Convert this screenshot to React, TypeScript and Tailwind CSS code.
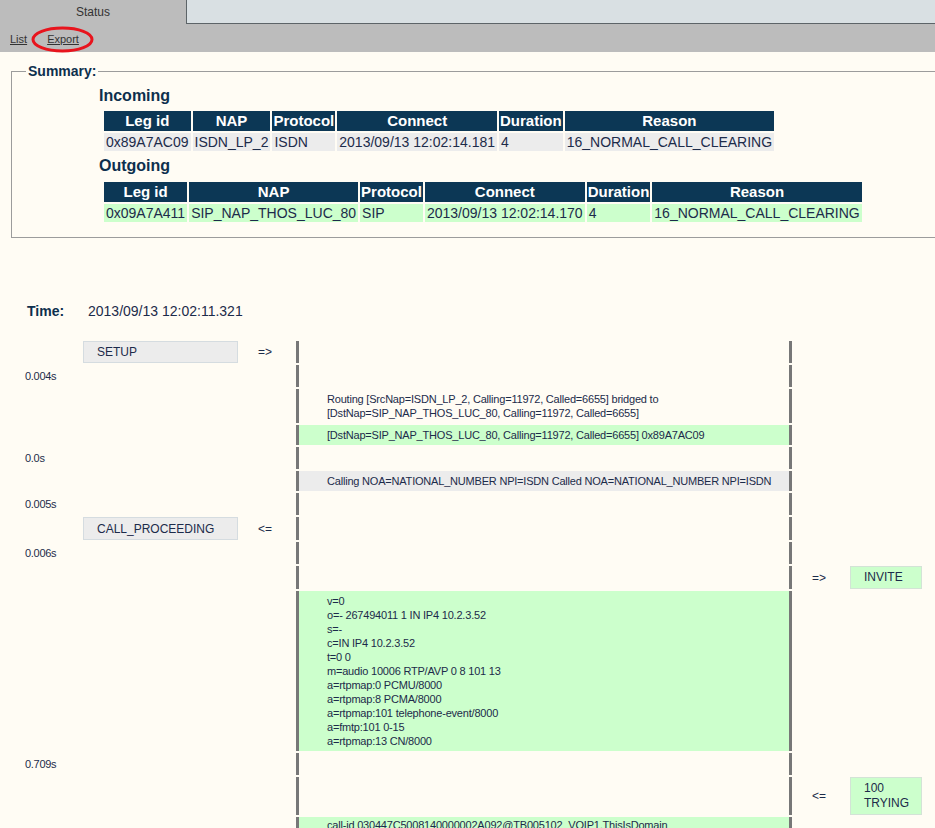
import React from "react";

type RowProps = {
  h: number;
  time?: string;
  left?: string;
  leftArrow?: string;
  center?: string[];
  centerBg?: string;
  rightArrow?: string;
  right?: string[];
};

const rowHeights: Record<number, string> = {
  20: "h-[20px]",
  22: "h-[22px]",
  23: "h-[23px]",
  34: "h-[34px]",
  38: "h-[38px]",
  160: "h-[160px]",
  120: "h-[120px]",
};

function Row({ h, time, left, leftArrow, center, centerBg, rightArrow, right }: RowProps) {
  return (
    <div className={`grid grid-cols-[83px_155px_58px_496px_58px_72px] ${rowHeights[h]}`}>
      <div className="flex items-center pl-[25px] text-[11px] tracking-[-0.3px]">{time}</div>
      <div className="flex">
        {left && (
          <div className="flex flex-1 items-center border border-[#d5dce0] bg-[#ececec] pl-[13px] text-[12px]">
            {left}
          </div>
        )}
      </div>
      <div className="flex items-center pl-[20px] text-[12px]">{leftArrow}</div>
      <div
        className={`flex flex-col justify-center border-x-[3px] border-[#777777] pl-[28px] text-[11px] leading-[14px] tracking-[-0.2px] ${centerBg ?? ""}`}
      >
        {center?.map((l, i) => (
          <div key={i} className="whitespace-nowrap">{l}</div>
        ))}
      </div>
      <div className="flex items-center pl-[20px] text-[12px]">{rightArrow}</div>
      <div className="flex">
        {right && (
          <div className="flex flex-1 flex-col justify-center border border-[#d3e3d6] bg-[#ccffcc] pl-[13px] text-[12px] leading-[15px]">
            {right.map((l, i) => (
              <div key={i}>{l}</div>
            ))}
          </div>
        )}
      </div>
    </div>
  );
}

const th = "h-[20px] bg-[#0c3755] px-[1px] text-center text-[15px] font-bold leading-[18px] text-white whitespace-nowrap";
const td = "h-[18px] px-[2px] text-[14px] leading-[16px] whitespace-nowrap";

export default function App() {
  return (
    <div className="min-h-screen w-full overflow-hidden bg-[#fffcf4] font-['Liberation_Sans',Arial,sans-serif] text-[#1c2b4a]">
      {/* TOP BAR */}
      <div className="relative h-[52px] w-[960px] bg-[#bcbcbc]">
        <div className="flex h-[24px]">
          <div className="flex w-[186px] items-center justify-center text-[12px] text-[#333]">Status</div>
          <div className="flex-1 border-b border-l border-[#5d6468] bg-[#d9e0e3]"></div>
        </div>
        <div className="flex items-center gap-[20px] pl-[10px] pt-[7px] text-[11px] text-[#333]">
          <span className="underline">List</span>
          <span className="underline">Export</span>
        </div>
        {/* red annotation ring */}
        <svg className="absolute left-[31px] top-[26px]" width="63" height="27" viewBox="0 0 63 27">
          <ellipse cx="31.5" cy="13.5" rx="29.5" ry="11.5" fill="none" stroke="#e8141d" strokeWidth="3" />
        </svg>
      </div>

      {/* SUMMARY */}
      <fieldset className="ml-[11px] mt-[11px] w-[960px] border border-[#9c9c9c] pb-[13px]">
        <legend className="ml-[14px] px-[2px] text-[14px] font-bold leading-[16px] text-[#0d2f4d]">Summary:</legend>

        <h2 className="ml-[87px] mt-[8px] text-[16px] font-bold leading-[18px] text-[#0d2f4d]">Incoming</h2>
        <table className="ml-[90px] mt-[4px] border-separate border-spacing-[2px]">
          <thead>
            <tr>
              <th className={th}>Leg id</th>
              <th className={th}>NAP</th>
              <th className={th}>Protocol</th>
              <th className={th}>Connect</th>
              <th className={th}>Duration</th>
              <th className={th}>Reason</th>
            </tr>
          </thead>
          <tbody>
            <tr className="bg-[#ececec]">
              <td className={td}>0x89A7AC09</td>
              <td className={td}>ISDN_LP_2</td>
              <td className={td}>ISDN</td>
              <td className={td}>2013/09/13 12:02:14.181</td>
              <td className={td}>4</td>
              <td className={td}>16_NORMAL_CALL_CLEARING</td>
            </tr>
          </tbody>
        </table>

        <h2 className="ml-[87px] mt-[4px] text-[16px] font-bold leading-[18px] text-[#0d2f4d]">Outgoing</h2>
        <table className="ml-[90px] mt-[5px] border-separate border-spacing-[2px]">
          <thead>
            <tr>
              <th className={th}>Leg id</th>
              <th className={th}>NAP</th>
              <th className={th}>Protocol</th>
              <th className={th}>Connect</th>
              <th className={th}>Duration</th>
              <th className={th}>Reason</th>
            </tr>
          </thead>
          <tbody>
            <tr className="bg-[#ccffcc]">
              <td className={td}>0x09A7A411</td>
              <td className={td}>SIP_NAP_THOS_LUC_80</td>
              <td className={td}>SIP</td>
              <td className={td}>2013/09/13 12:02:14.170</td>
              <td className={td}>4</td>
              <td className={td}>16_NORMAL_CALL_CLEARING</td>
            </tr>
          </tbody>
        </table>
      </fieldset>

      {/* TIME */}
      <div className="mt-[65px] flex items-center text-[14px] leading-[16px]">
        <span className="ml-[27px] w-[61px] font-bold text-[#0d2f4d]">Time:</span>
        <span>2013/09/13 12:02:11.321</span>
      </div>

      {/* SEQUENCE */}
      <div className="mt-[22px] flex flex-col gap-[2px]">
        <Row h={22} left="SETUP" leftArrow="=>" />
        <Row h={22} time="0.004s" />
        <Row
          h={34}
          center={[
            "Routing [SrcNap=ISDN_LP_2, Calling=11972, Called=6655] bridged to",
            "[DstNap=SIP_NAP_THOS_LUC_80, Calling=11972, Called=6655]",
          ]}
        />
        <Row h={20} centerBg="bg-[#ccffcc]" center={["[DstNap=SIP_NAP_THOS_LUC_80, Calling=11972, Called=6655] 0x89A7AC09"]} />
        <Row h={22} time="0.0s" />
        <Row
          h={20}
          centerBg="bg-[#ececec]"
          center={["Calling NOA=NATIONAL_NUMBER NPI=ISDN Called NOA=NATIONAL_NUMBER NPI=ISDN"]}
        />
        <Row h={22} time="0.005s" />
        <Row h={23} left="CALL_PROCEEDING" leftArrow="<=" />
        <Row h={22} time="0.006s" />
        <Row h={23} rightArrow="=>" right={["INVITE"]} />
        <Row
          h={160}
          centerBg="bg-[#ccffcc]"
          center={[
            "v=0",
            "o=- 267494011 1 IN IP4 10.2.3.52",
            "s=-",
            "c=IN IP4 10.2.3.52",
            "t=0 0",
            "m=audio 10006 RTP/AVP 0 8 101 13",
            "a=rtpmap:0 PCMU/8000",
            "a=rtpmap:8 PCMA/8000",
            "a=rtpmap:101 telephone-event/8000",
            "a=fmtp:101 0-15",
            "a=rtpmap:13 CN/8000",
          ]}
        />
        <Row h={22} time="0.709s" />
        <Row h={38} rightArrow="<=" right={["100", "TRYING"]} />
        <div className="grid h-[120px] grid-cols-[83px_155px_58px_496px_58px_72px]">
          <div></div>
          <div></div>
          <div></div>
          <div className="flex flex-col border-x-[3px] border-[#777777] bg-[#ccffcc] pl-[28px] pt-[1px] text-[11px] leading-[14px] tracking-[-0.2px]">
            <div className="whitespace-nowrap">call-id 030447C5008140000002A092@TB005102_VOIP1.ThisIsDomain</div>
            <div className="whitespace-nowrap">cseq 1 INVITE</div>
          </div>
        </div>
      </div>
    </div>
  );
}
